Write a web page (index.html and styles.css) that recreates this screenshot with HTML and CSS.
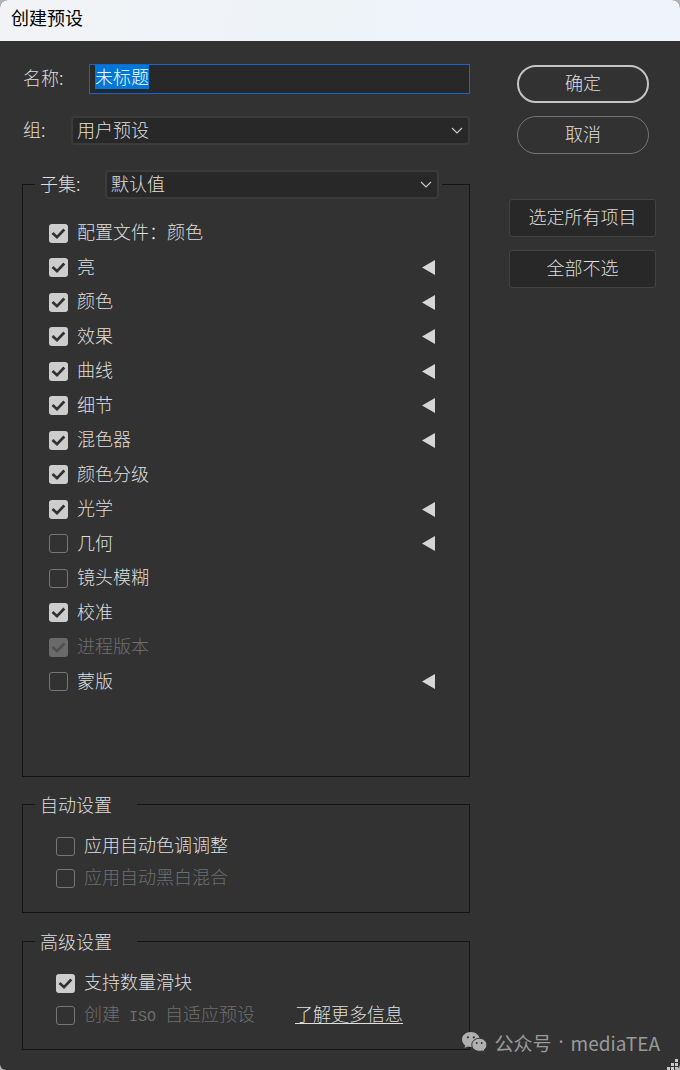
FILE: index.html
```html
<!DOCTYPE html>
<html lang="zh-CN">
<head>
  <meta charset="UTF-8">
  <meta name="viewport" content="width=device-width, initial-scale=1.0">
  <title>创建预设</title>
  <link rel="stylesheet" href="styles.css">
</head>
<body>

  <div class="window">
    <header class="title-bar">
      <h1>创建预设</h1>
    </header>

    <form class="dialog" onsubmit="return false">
      <div class="settings">
        <div class="field name-field">
          <label for="presetName">名称:</label>
          <input type="text" id="presetName" value="未标题" autocomplete="off" spellcheck="false">
        </div>

        <div class="field group-field">
          <label for="presetGroup">组:</label>
          <select id="presetGroup">
            <option>用户预设</option>
          </select>
        </div>

        <!-- 子集 -->
        <fieldset class="subset">
          <legend>
            <label for="subset">子集:</label>
            <select id="subset">
              <option>默认值</option>
            </select>
          </legend>
          <ul id="options" class="options"></ul>
        </fieldset>

        <!-- 自动设置 -->
        <fieldset class="group">
          <legend>自动设置</legend>
          <div class="line">
            <label class="check"><input type="checkbox"><span>应用自动色调调整</span></label>
          </div>
          <div class="line">
            <label class="check disabled"><input type="checkbox" disabled><span>应用自动黑白混合</span></label>
          </div>
        </fieldset>

        <!-- 高级设置 -->
        <fieldset class="group">
          <legend>高级设置</legend>
          <div class="line">
            <label class="check"><input type="checkbox" checked><span>支持数量滑块</span></label>
          </div>
          <div class="line">
            <label class="check disabled"><input type="checkbox" disabled><span>创建<b class="latin"> ISO </b>自适应预设</span></label>
            <a href="#">了解更多信息</a>
          </div>
        </fieldset>
      </div>

      <div class="actions">
        <button type="submit" class="pill primary">确定</button>
        <button type="button" class="pill">取消</button>
        <button type="button" class="box first" onclick="setAll(true)">选定所有项目</button>
        <button type="button" class="box" onclick="setAll(false)">全部不选</button>
      </div>
    </form>

    <div class="watermark">
      <svg width="25" height="21" viewBox="0 0 25 21" aria-hidden="true">
        <path fill="#b0b0b0" d="M8.8 0C3.9 0 0 3.3 0 7.5c0 2.4 1.3 4.5 3.300 5.900L2.500 16l3-1.500c1.100.3 2.200.5 3.700.5C14 15 17.700 11.700 17.700 7.500S13.700 0 8.800 0z"/>
        <path fill="#b0b0b0" stroke="#323232" stroke-width="1" d="M17.300 6.300c-4.200 0-7.500 2.900-7.500 6.500s3.300 6.500 7.500 6.500c1 0 1.900-.1 2.700-.4l2.700 1.400-.7-2.300c1.800-1.200 2.900-3.100 2.900-5.200 0-3.600-3.400-6.500-7.600-6.500z"/>
        <g fill="#323232">
          <circle cx="5.900" cy="5.300" r="1.100"/>
          <circle cx="11.800" cy="5.300" r="1.100"/>
          <circle cx="14.800" cy="11" r="0.900"/>
          <circle cx="19.700" cy="11" r="0.900"/>
        </g>
      </svg>
      <span>公众号</span><span class="dot">·</span><span>mediaTEA</span>
    </div>

    <svg class="grip" width="13" height="11" viewBox="0 0 13 11" aria-hidden="true">
      <path fill="#c8c8c8" d="M8 0h3v3h-3zM4 4h3v3h-3zM8 4h3v3h-3zM0 8h3v3h-3zM4 8h3v3h-3zM8 8h3v3h-3z"/>
    </svg>
  </div>

  <script>
    const options = [
      { name: "配置文件：颜色", checked: true },
      { name: "亮", checked: true, more: true },
      { name: "颜色", checked: true, more: true },
      { name: "效果", checked: true, more: true },
      { name: "曲线", checked: true, more: true },
      { name: "细节", checked: true, more: true },
      { name: "混色器", checked: true, more: true },
      { name: "颜色分级", checked: true },
      { name: "光学", checked: true, more: true },
      { name: "几何", more: true },
      { name: "镜头模糊" },
      { name: "校准", checked: true },
      { name: "进程版本", checked: true, disabled: true },
      { name: "蒙版", more: true },
    ];

    const list = document.getElementById("options");

    list.innerHTML = options.map(o => `
      <li>
        <label class="check ${o.disabled ? "disabled" : ""}">
          <input type="checkbox" ${o.checked ? "checked" : ""} ${o.disabled ? "disabled" : ""}>
          <span>${o.name}</span>
        </label>
        ${o.more ? `<button type="button" class="expand" aria-label="展开${o.name}">
          <svg width="13" height="15" viewBox="0 0 13 15"><path d="M13 0v15L0 7.500z" fill="#d6d6d6"/></svg>
        </button>` : ""}
      </li>
    `).join("");

    function setAll(value) {
      list.querySelectorAll("input:not(:disabled)").forEach(box => box.checked = value);
    }

    // 打开时选中名称
    const nameInput = document.getElementById("presetName");
    nameInput.focus();
    nameInput.select();
  </script>

</body>
</html>
```
FILE: styles.css
```css
* {
  margin: 0;
  padding: 0;
  box-sizing: border-box;
}

body {
  background: #b4b4b4;
  color: #dedede;
  font-family: "Noto Sans CJK SC", sans-serif;
  font-size: 18px;
  font-weight: 300;
  line-height: 27px;
}

input,
select,
button {
  font: inherit;
  color: inherit;
}

.window {
  position: relative;
  display: flex;
  flex-direction: column;
  min-height: 100vh;
  background: #323232;
  border-radius: 8px 8px 6px 6px;
  overflow: hidden;
}

/* 标题栏 */
.title-bar {
  padding: 4px 11px 10px;
  background: linear-gradient(100deg, #f2f3f6, #eef3f8 50%, #eff3fc 65%);
  color: #000;
}

.title-bar h1 {
  font-size: 18px;
  font-weight: 400;
  line-height: 27px;
}

.dialog {
  display: flex;
  align-items: flex-start;
  gap: 39px;
  padding: 23px 24px 20px 22px;
}

.settings {
  flex: 1;
  min-width: 0;
}

/* 名称和组 */
.field {
  display: flex;
  padding-left: 1px;
}

.name-field label {
  width: 66px;
}

.group-field label {
  width: 48px;
}

.name-field input {
  flex: 1;
  min-width: 0;
  height: 30px;
  padding: 2px 5px 8px;
  background: #282828;
  border: 1px solid #1265d2;
  line-height: 18px;
  outline: none;
}

.name-field input::selection {
  background: #0078d7;
  color: #fff;
}

.group-field {
  margin: 22px 0 25px;
}

select {
  flex: 1;
  min-width: 0;
  height: 29px;
  padding: 0 24px 2px 4px;
  appearance: none;
  background: #282828 url("data:image/svg+xml,%3Csvg xmlns='http://www.w3.org/2000/svg' width='12' height='7'%3E%3Cpath d='M1 1l5 5 5-5' fill='none' stroke='%23c8c8c8' stroke-width='1.200'/%3E%3C/svg%3E") no-repeat right 5px center;
  border: 2px solid #3b3b3b;
  border-radius: 4px;
  line-height: 23px;
  outline: none;
}

/* 分组框 */
fieldset {
  min-width: 0;
  padding: 0 27px 18px 12px;
  border: 1px solid #141414;
}

.subset legend {
  display: flex;
  width: 100%;
  padding: 0 3px 0 5px;
}

.subset legend label {
  width: 65px;
}

.options {
  display: grid;
  grid-auto-rows: 1fr;
  height: 483px;
  margin: 17px 0 59px;
  padding: 0 7px 0 14px;
  list-style: none;
}

.options li {
  display: flex;
  align-items: center;
  justify-content: space-between;
}

.group {
  margin-top: 14px;
}

.group + .group {
  margin-top: 15px;
}

.group legend {
  padding: 0 25px 0 5px;
}

.group .line {
  display: flex;
  align-items: center;
  gap: 40px;
  height: 32px;
  padding-left: 21px;
}

.group legend + .line {
  margin-top: 12px;
}

/* 复选框 */
.check {
  display: flex;
  align-items: center;
  gap: 9px;
}

.check span,
.line a {
  padding-bottom: 3px;
}

.check input {
  flex: none;
  width: 19px;
  height: 19px;
  appearance: none;
  border: 1px solid #767676;
  border-radius: 3px;
}

.check input:checked {
  background: #cdcdcd url("data:image/svg+xml,%3Csvg xmlns='http://www.w3.org/2000/svg' width='19' height='19'%3E%3Cpath d='M3.500 9l4.500 4.200 7.300-7.700' fill='none' stroke='%23323232' stroke-width='2.700'/%3E%3C/svg%3E") center;
  border: none;
}

.check.disabled {
  color: #6e6e6e;
}

.check.disabled input:checked {
  background: #6a6a6a url("data:image/svg+xml,%3Csvg xmlns='http://www.w3.org/2000/svg' width='19' height='19'%3E%3Cpath d='M3.500 9l4.500 4.200 7.300-7.700' fill='none' stroke='%23505050' stroke-width='2.700'/%3E%3C/svg%3E") center;
}

.latin {
  font-family: "Liberation Mono", monospace;
  font-size: 15px;
  font-weight: 400;
  line-height: 18px;
  white-space: pre;
}

.expand {
  display: flex;
  background: none;
  border: none;
  cursor: pointer;
}

a {
  color: inherit;
  text-underline-offset: 2px;
}

/* 右侧按钮 */
.actions {
  display: flex;
  flex-direction: column;
  width: 147px;
  padding-top: 1px;
}

.actions button {
  height: 38px;
  padding-bottom: 3px;
  cursor: pointer;
}

.actions .pill {
  margin: 0 7px 13px 8px;
  background: none;
  border: 1px solid #747474;
  border-radius: 19px;
}

.actions .primary {
  border: 2px solid #c4c4c4;
}

.box {
  margin-bottom: 13px;
  background: #282828;
  border: 1px solid #434343;
  border-radius: 3px;
}

.box.first {
  margin-top: 32px;
}

/* 水印 */
.watermark {
  position: absolute;
  right: 20px;
  bottom: 14px;
  display: flex;
  align-items: center;
  gap: 7px;
  color: #999;
  font-size: 19px;
  font-weight: 400;
}

.watermark .dot {
  font-family: "Noto Sans", sans-serif;
}

.grip {
  position: absolute;
  right: 0;
  bottom: 0;
}
```
